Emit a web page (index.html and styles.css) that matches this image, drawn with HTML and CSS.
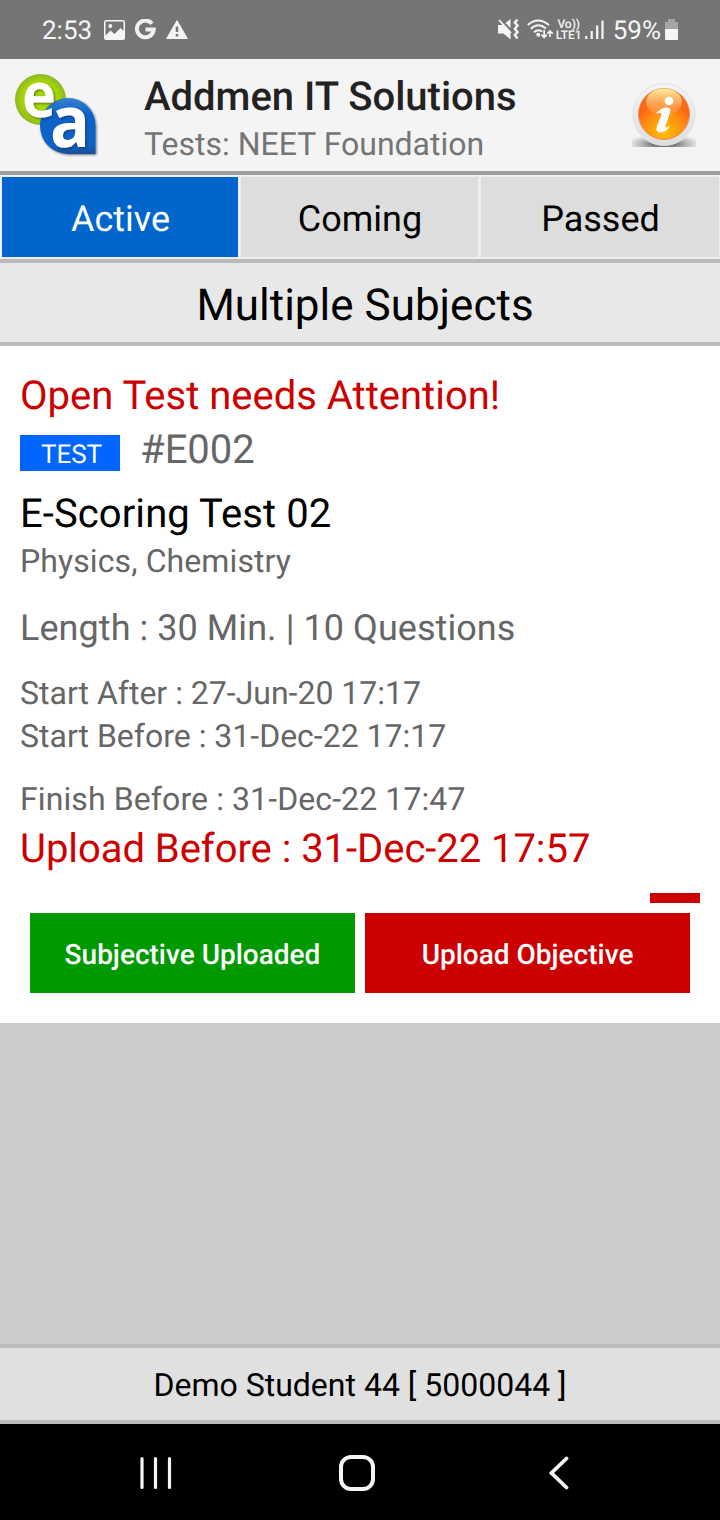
FILE: index.html
```html
<!DOCTYPE html>
<html lang="en">
<head>
    <meta charset="UTF-8" />
    <meta name="viewport" content="width=device-width, initial-scale=1.0">
    <title>Addmen IT Solutions - Tests</title>
    <link rel="stylesheet" href="styles.css">
</head>
<body>
    <!-- Phone status bar -->
    <div class="status-bar">
        <div class="status-left">
            <span class="clock">2:53</span>
            <svg class="icon-picture" width="21" height="20" viewBox="0 0 21 20">
                <path fill="#f5f5f5" fill-rule="evenodd" d="M2 0h17q2 0 2 2v16q0 2-2 2H2q-2 0-2-2V2q0-2 2-2zM1.500 1.500v14l5-5 4 3.500 6-6 3 3V1.500z"/>
                <circle cx="6.300" cy="6" r="2" fill="#f5f5f5"/>
            </svg>
            <svg class="icon-google" width="21" height="21" viewBox="0 0 21 21">
                <path fill="none" stroke="#f0f0f0" stroke-width="4" d="M17 4.800A8.400 8.400 0 1 0 18.700 10.500H10.500"/>
            </svg>
            <svg class="icon-warning" width="22" height="19" viewBox="0 0 22 19">
                <path fill="#f5f5f5" stroke="#f5f5f5" stroke-linejoin="round" d="M11 .7L21.300 18.500H.7z"/>
                <path stroke="#757575" stroke-width="2.600" d="M11 6.500v5.500M11 14v2.600"/>
            </svg>
        </div>
        <div class="status-right">
            <svg class="icon-mute" width="21" height="21" viewBox="0 0 21 21">
                <path fill="#f5f5f5" d="M0 6h5L12.500 14v6.500L5.500 14.500H0zM7.500 4L12.500 0v9z"/>
                <path fill="none" stroke="#f5f5f5" stroke-width="1.800" d="M1 1l12 13"/>
                <path fill="none" stroke="#f5f5f5" stroke-width="2.400" d="M19.500 .5L16.800 3.500l2.700 3-2.700 3.500 2.700 3-2.700 3 2.700 3.500"/>
            </svg>
            <svg class="icon-wifi" width="27" height="21" viewBox="0 0 27 21">
                <path fill="none" stroke="#f5f5f5" stroke-width="2" d="M.8 6Q11 -3 22 6M3.800 9.800Q11 3 19 9.500M7 13.200Q11 9.500 15.300 12.500"/>
                <circle cx="11.200" cy="15.800" r="2" fill="#f5f5f5"/>
                <path fill="none" stroke="#f5f5f5" stroke-width="1.700" d="M17.200 11v7M14.500 15.700l2.700 2.800 2.700-2.800M23 18v-6M20.400 14.700L23 12l2.700 2.700"/>
            </svg>
            <span class="volte"><span>Vo))</span><span>LTE1</span></span>
            <svg class="icon-signal" width="19" height="20" viewBox="0 0 19 20">
                <path stroke="#f5f5f5" stroke-width="2.200" d="M1.200 16v3M6.700 11v8M12.200 5.500V19M17.500 .5V19"/>
            </svg>
            <span class="battery-level">59%</span>
            <svg class="icon-battery" width="13" height="21" viewBox="0 0 13 21">
                <path fill="#a5a5a5" d="M3 0h7v3h3v8H0V3h3z"/>
                <path fill="#f5f5f5" d="M0 10h13v10q0 1-1 1H1q-1 0-1-1z"/>
            </svg>
        </div>
    </div>

    <!-- App header -->
    <div class="header">
        <svg class="logo" width="84" height="84" viewBox="0 0 84 84">
            <defs>
                <radialGradient id="logo-green">
                    <stop offset="0.7" stop-color="#a6d800"/>
                    <stop offset="1" stop-color="#8fb52a"/>
                </radialGradient>
                <linearGradient id="logo-blue" x1="0" y1="0" x2="0" y2="1">
                    <stop offset="0" stop-color="#3a7fd0"/>
                    <stop offset="0.3" stop-color="#0b62c8"/>
                    <stop offset="0.85" stop-color="#0b62c8"/>
                    <stop offset="1" stop-color="#174f94"/>
                </linearGradient>
                <filter id="logo-shadow" x="-20%" y="-20%" width="150%" height="150%">
                    <feDropShadow dx="1" dy="1" stdDeviation="1" flood-color="#123" flood-opacity="0.6"/>
                </filter>
            </defs>
            <circle cx="25.500" cy="26.500" r="25.500" fill="url(#logo-green)"/>
            <path fill="url(#logo-blue)" filter="url(#logo-shadow)" d="M53 25A27.500 27.500 0 0 1 80.500 52.500V81H53A28 28 0 0 1 53 25z"/>
            <text class="logo-letter" x="7" y="43.500" font-size="62" textLength="34" lengthAdjust="spacingAndGlyphs" filter="url(#logo-shadow)">e</text>
            <text class="logo-letter" x="35" y="73.500" font-size="71" textLength="40" lengthAdjust="spacingAndGlyphs" filter="url(#logo-shadow)">a</text>
        </svg>
        <div class="header-text">
            <h1>Addmen IT Solutions</h1>
            <p>Tests: NEET Foundation</p>
        </div>
        <svg class="info-icon" width="64" height="64" viewBox="0 0 64 64">
            <defs>
                <radialGradient id="info-fill" cx="0.5" cy="0.85" r="0.75">
                    <stop offset="0" stop-color="#ffc000"/>
                    <stop offset="0.5" stop-color="#ff9010"/>
                    <stop offset="0.8" stop-color="#ff6410"/>
                    <stop offset="1" stop-color="#f06a20"/>
                </radialGradient>
                <linearGradient id="info-gloss" x1="0" y1="0" x2="0" y2="1">
                    <stop offset="0" stop-color="#fff0a0"/>
                    <stop offset="1" stop-color="#ff9a50" stop-opacity="0.4"/>
                </linearGradient>
                <linearGradient id="info-ring" x1="0" y1="0" x2="0" y2="1">
                    <stop offset="0" stop-color="#f4f4f4"/>
                    <stop offset="1" stop-color="#dedede"/>
                </linearGradient>
                <radialGradient id="info-floor">
                    <stop offset="0.3" stop-color="#777"/>
                    <stop offset="1" stop-color="#999" stop-opacity="0"/>
                </radialGradient>
            </defs>
            <ellipse cx="32" cy="61" rx="38" ry="10" fill="url(#info-floor)"/>
            <circle cx="32" cy="31.500" r="31" fill="url(#info-ring)" stroke="#e2e2e2"/>
            <circle cx="32" cy="31" r="25.500" fill="url(#info-fill)" stroke="#e0906a"/>
            <ellipse cx="32" cy="19" rx="18" ry="13.500" fill="url(#info-gloss)"/>
            <circle cx="37" cy="18" r="4.300" fill="#fff"/>
            <path fill="#fff" d="M23.500 30.500Q30 24 35 24.500Q39.500 25 38 30L33.500 43Q33 46.500 38.500 42.500Q33.500 50 28 49.500Q23 49 25 43L29.500 31.500Q29.500 28.500 23.500 30.500z"/>
        </svg>
    </div>

    <div class="tabs">
        <div class="tab active">Active</div>
        <div class="tab">Coming</div>
        <div class="tab">Passed</div>
    </div>

    <h2 class="subject-title">Multiple Subjects</h2>

    <!-- Open test -->
    <div class="test-card">
        <div class="line-large alert">Open Test needs Attention!</div>
        <div class="test-id">
            <span class="badge">TEST</span>
            <span class="line-large">#E002</span>
        </div>
        <div class="line-large test-name">E-Scoring Test 02</div>
        <div class="line-small subjects">Physics, Chemistry</div>
        <div class="length">Length : 30 Min. | 10 Questions</div>
        <div class="line-small start-after">Start After : 27-Jun-20 17:17</div>
        <div class="line-small start-before">Start Before : 31-Dec-22 17:17</div>
        <div class="line-small finish-before">Finish Before : 31-Dec-22 17:47</div>
        <div class="line-large alert upload-before">Upload Before : 31-Dec-22 17:57</div>
        <div class="marker"></div>
        <div class="actions">
            <button class="done-btn">Subjective Uploaded</button>
            <button class="upload-btn">Upload Objective</button>
        </div>
    </div>

    <div class="footer">Demo Student 44 [ 5000044 ]</div>

    <!-- Phone navigation -->
    <div class="nav-bar">
        <svg width="32" height="34" viewBox="0 0 32 34">
            <path stroke="#f5f5f5" stroke-width="3.200" stroke-linecap="round" d="M2 2.500v29M15.500 2.500v29M29.500 2.500v29"/>
        </svg>
        <svg class="icon-home" width="36" height="36" viewBox="0 0 36 36">
            <rect x="2" y="2" width="32" height="32" rx="10" fill="none" stroke="#f5f5f5" stroke-width="4"/>
        </svg>
        <svg width="20" height="34" viewBox="0 0 20 34">
            <path fill="none" stroke="#f5f5f5" stroke-width="3.800" stroke-linecap="round" d="M17.500 2.500L2.500 17l15 14.500"/>
        </svg>
    </div>
</body>
</html>
```

FILE: styles.css
```css
:root {
    --border-color: #bababa;
    --text-muted-color: #666;
    --danger-color: #c00;
}

* {
    margin: 0;
    padding: 0;
    box-sizing: border-box;
}

body {
    font-family: Roboto, sans-serif;
    text-rendering: geometricPrecision;
    background-color: #ccc;
    color: #000;
    display: flex;
    flex-direction: column;
    width: 720px;
    height: 1520px;
}

svg {
    display: block;
    flex: none;
}

/* Status bar */
.status-bar {
    height: 59px;
    padding: 0 42px;
    background-color: #757575;
    color: #f5f5f5;
    font-size: 26px;
    line-height: 60px;
    display: flex;
    justify-content: space-between;
}

.status-left, .status-right {
    display: flex;
    align-items: center;
}

.clock, .battery-level {
    line-height: 30px;
    padding-top: 2px;
}

.icon-picture { margin-left: 12px; }
.icon-google { margin-left: 10px; }
.icon-warning { margin-left: 10px; }
.icon-wifi { margin-left: 8px; }

.volte {
    display: flex;
    flex-direction: column;
    align-items: center;
    width: 26px;
    margin-left: 2px;
    font-size: 12px;
    line-height: 11px;
    font-weight: 500;
}

.icon-signal { margin-left: 3px; }
.battery-level { margin-left: 9px; }
.icon-battery { margin-left: 4px; }

/* Header */
.header {
    height: 116px;
    padding: 0 24px 0 15px;
    background-color: #f4f4f4;
    border-bottom: 4px solid #9c9c9c;
    display: flex;
    align-items: center;
}

.logo { overflow: visible; }

.logo-letter {
    font-family: "Open Sans", sans-serif;
    font-weight: 700;
    fill: #fff;
}

.header-text {
    flex: 1;
    margin-left: 45px;
    padding-top: 10px;
}

.header-text h1 {
    font-size: 40px;
    line-height: 48px;
    font-weight: 500;
    color: #222;
}

.header-text p {
    font-size: 32px;
    line-height: 46px;
    color: #757575;
}

/* Tabs */
.tabs {
    height: 88px;
    padding: 2px 1px 2px 2px;
    background-color: #eee;
    border-bottom: 4px solid var(--border-color);
    display: grid;
    grid-template-columns: 236px 237px 1fr;
    grid-template-rows: 80px;
    gap: 3px;
}

.tab {
    padding-left: 1px;
    background-color: #ddd;
    font-size: 36px;
    line-height: 84px;
    text-align: center;
}

.tab.active {
    background-color: #06c;
    color: #fff;
}

.subject-title {
    height: 83px;
    padding-left: 10px;
    background-color: #e8e8e8;
    border-bottom: 4px solid var(--border-color);
    font-size: 44px;
    line-height: 84px;
    font-weight: 400;
    text-align: center;
}

/* Test card */
.test-card {
    height: 677px;
    padding: 26px 20px 30px;
    background-color: #fff;
    color: var(--text-muted-color);
}

.line-large {
    font-size: 40px;
    line-height: 48px;
}

.line-small {
    font-size: 32px;
    line-height: 38px;
}

.alert { color: var(--danger-color); }

.test-id {
    display: flex;
    align-items: flex-end;
    gap: 20px;
    margin-top: 6px;
}

.badge {
    width: 100px;
    height: 36px;
    margin-bottom: 3px;
    padding: 1px 0 0 3px;
    background-color: #06f;
    color: #fff;
    font-size: 26px;
    line-height: 38px;
    text-align: center;
}

.test-name {
    margin-top: 16px;
    color: #000;
    letter-spacing: 0.08px;
}

.subjects {
    margin-top: 4px;
    letter-spacing: 0.1px;
}

.length {
    margin-top: 27px;
    font-size: 36px;
    line-height: 42px;
    letter-spacing: 0.06px;
}

.start-after { margin-top: 25px; }
.start-before { margin-top: 5px; }

.finish-before {
    margin-top: 25px;
    letter-spacing: 0.1px;
}

.upload-before {
    margin-top: 7px;
    letter-spacing: -0.05px;
}

.marker {
    width: 50px;
    height: 10px;
    margin: 20px 0 0 auto;
    background-color: var(--danger-color);
}

.actions {
    display: flex;
    gap: 10px;
    margin: 10px 10px 0;
}

button {
    flex: 1;
    height: 80px;
    padding-top: 3px;
    border: none;
    color: #fff;
    font-family: inherit;
    font-size: 28px;
    font-weight: 500;
    line-height: 76px;
    text-rendering: inherit;
}

.done-btn { background-color: #090; }
.upload-btn { background-color: var(--danger-color); }

/* Footer */
.footer {
    height: 80px;
    margin-top: auto;
    background-color: #e0e0e0;
    border-top: 4px solid var(--border-color);
    border-bottom: 4px solid var(--border-color);
    font-size: 32px;
    line-height: 74px;
    text-align: center;
}

.nav-bar {
    height: 96px;
    padding: 2px 151px 0 140px;
    background-color: #000;
    display: flex;
    align-items: center;
    justify-content: space-between;
}

.icon-home { margin-right: 8px; }
```
